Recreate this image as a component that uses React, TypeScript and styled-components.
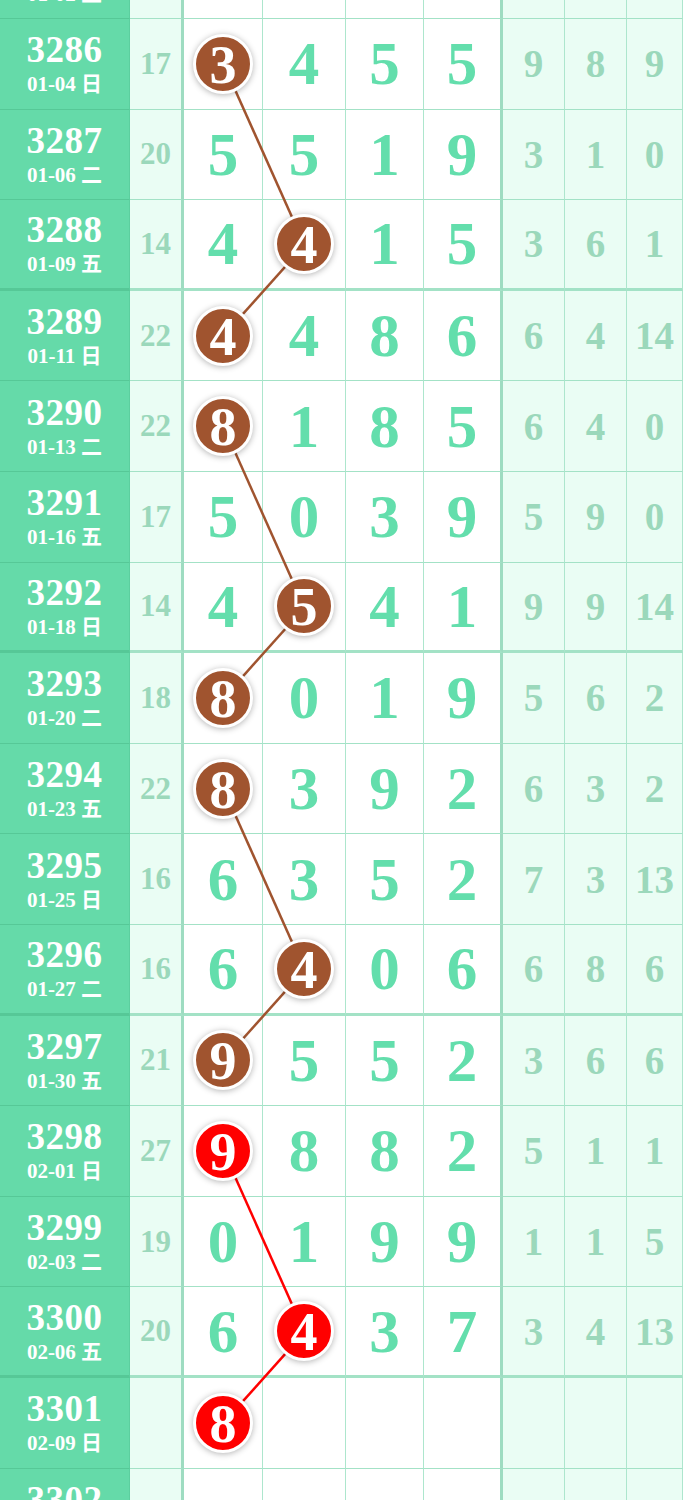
import React from 'react';
import styled, { createGlobalStyle } from 'styled-components';

const GlobalStyle = createGlobalStyle`
  html, body {
    margin: 0;
    padding: 0;
    background: #ffffff;
    overflow: hidden;
  }
`;

const ROW_H = 90.6;
const COLS = [130, 54, 79, 83, 78, 79, 62, 62, 56];
const SERIF = `'Liberation Serif', 'Noto Sans CJK SC', serif`;

type Ball = { col: number; color: 'brown' | 'red' };
type Draw = {
  no: number;
  date: string;
  sum?: number;
  digits: (number | null)[];
  rest: (number | null)[];
  ball?: Ball;
};

const draws: Draw[] = [
  { no: 3285, date: '01-02 五', sum: 19, digits: [7, 2, 6, 4], rest: [8, 7, 8] },
  { no: 3286, date: '01-04 日', sum: 17, digits: [3, 4, 5, 5], rest: [9, 8, 9], ball: { col: 0, color: 'brown' } },
  { no: 3287, date: '01-06 二', sum: 20, digits: [5, 5, 1, 9], rest: [3, 1, 0] },
  { no: 3288, date: '01-09 五', sum: 14, digits: [4, 4, 1, 5], rest: [3, 6, 1], ball: { col: 1, color: 'brown' } },
  { no: 3289, date: '01-11 日', sum: 22, digits: [4, 4, 8, 6], rest: [6, 4, 14], ball: { col: 0, color: 'brown' } },
  { no: 3290, date: '01-13 二', sum: 22, digits: [8, 1, 8, 5], rest: [6, 4, 0], ball: { col: 0, color: 'brown' } },
  { no: 3291, date: '01-16 五', sum: 17, digits: [5, 0, 3, 9], rest: [5, 9, 0] },
  { no: 3292, date: '01-18 日', sum: 14, digits: [4, 5, 4, 1], rest: [9, 9, 14], ball: { col: 1, color: 'brown' } },
  { no: 3293, date: '01-20 二', sum: 18, digits: [8, 0, 1, 9], rest: [5, 6, 2], ball: { col: 0, color: 'brown' } },
  { no: 3294, date: '01-23 五', sum: 22, digits: [8, 3, 9, 2], rest: [6, 3, 2], ball: { col: 0, color: 'brown' } },
  { no: 3295, date: '01-25 日', sum: 16, digits: [6, 3, 5, 2], rest: [7, 3, 13] },
  { no: 3296, date: '01-27 二', sum: 16, digits: [6, 4, 0, 6], rest: [6, 8, 6], ball: { col: 1, color: 'brown' } },
  { no: 3297, date: '01-30 五', sum: 21, digits: [9, 5, 5, 2], rest: [3, 6, 6], ball: { col: 0, color: 'brown' } },
  { no: 3298, date: '02-01 日', sum: 27, digits: [9, 8, 8, 2], rest: [5, 1, 1], ball: { col: 0, color: 'red' } },
  { no: 3299, date: '02-03 二', sum: 19, digits: [0, 1, 9, 9], rest: [1, 1, 5] },
  { no: 3300, date: '02-06 五', sum: 20, digits: [6, 4, 3, 7], rest: [3, 4, 13], ball: { col: 1, color: 'red' } },
  { no: 3301, date: '02-09 日', digits: [8, null, null, null], rest: [null, null, null], ball: { col: 0, color: 'red' } },
  { no: 3302, date: '02-11 二', digits: [null, null, null, null], rest: [null, null, null] },
];

// balls joined by a line, four rows to a group
const groups: number[][] = [
  [3286, 3288, 3289],
  [3290, 3292, 3293],
  [3294, 3296, 3297],
  [3298, 3300, 3301],
];

const BALL_COLORS = { brown: '#a0542f', red: '#ff0000' };

const Page = styled.div`
  width: 684px;
  height: 1500px;
  overflow: hidden;
`;

const Chart = styled.div`
  position: relative;
  margin-top: -71.6px;
  width: ${COLS.reduce((a, b) => a + b, 0)}px;
`;

const Row = styled.div<{ $thick: boolean }>`
  display: grid;
  grid-template-columns: ${COLS.map((c) => c + 'px').join(' ')};
  height: ${ROW_H}px;
  --line: ${(p) => (p.$thick ? '3px' : '1px')};
`;

const PeriodCell = styled.div`
  box-sizing: border-box;
  background: #65daa9;
  border-bottom: var(--line) solid #56c897;
  border-right: 1px solid #5ccf9f;
  display: flex;
  flex-direction: column;
  align-items: center;
  justify-content: center;
  color: #ffffff;
  font-family: ${SERIF};
  font-weight: 700;
`;

const PeriodNo = styled.div`
  font-size: 37px;
  line-height: 36px;
  letter-spacing: 0.5px;
`;

const PeriodDate = styled.div`
  font-size: 21px;
  line-height: 22px;
  margin-top: 5px;
`;

const Cell = styled.div<{ $mint?: boolean; $edge?: boolean }>`
  box-sizing: border-box;
  background: ${(p) => (p.$mint ? '#eafdf4' : '#ffffff')};
  border-bottom: var(--line) solid #a3e2c6;
  border-right: ${(p) => (p.$edge ? '3px solid #9edcc1' : '1px solid #ade6cd')};
  display: flex;
  align-items: center;
  justify-content: center;
  font-family: ${SERIF};
  font-weight: 700;
`;

const SumText = styled.span`
  font-size: 31px;
  color: #9bd8bb;
`;

const BigDigit = styled.span`
  font-size: 61px;
  line-height: 1;
  color: #63deac;
`;

const SmallDigit = styled.span`
  font-size: 39px;
  color: #9bd8bb;
`;

const BallMark = styled.span<{ $color: string }>`
  position: relative;
  z-index: 2;
  box-sizing: border-box;
  width: 60px;
  height: 60px;
  border-radius: 50%;
  border: 3px solid #ffffff;
  background: ${(p) => p.$color};
  box-shadow: 0 1px 6px rgba(0, 0, 0, 0.3);
  display: flex;
  align-items: center;
  justify-content: center;
  color: #ffffff;
  font-size: 54px;
  line-height: 1;
  padding-top: 2px;
`;

const Lines = styled.svg`
  position: absolute;
  top: 0;
  left: 0;
  z-index: 1;
  pointer-events: none;
`;

function colCenter(col: number) {
  let x = COLS[0] + COLS[1];
  for (let i = 0; i < col; i++) x += COLS[2 + i];
  return x + COLS[2 + col] / 2;
}

function App() {
  const width = COLS.reduce((a, b) => a + b, 0);
  const height = draws.length * ROW_H;
  const center = (no: number) => {
    const i = draws.findIndex((d) => d.no === no);
    const d = draws[i];
    return { x: colCenter(d.ball!.col), y: i * ROW_H + ROW_H / 2, color: d.ball!.color };
  };

  return (
    <Page>
      <GlobalStyle />
      <Chart>
        {draws.map((d) => (
          <Row key={d.no} $thick={(d.no - 3284) % 4 === 0}>
            <PeriodCell>
              <PeriodNo>{d.no}</PeriodNo>
              <PeriodDate>{d.date}</PeriodDate>
            </PeriodCell>
            <Cell $mint $edge>
              {d.sum !== undefined && <SumText>{d.sum}</SumText>}
            </Cell>
            {d.digits.map((n, i) => (
              <Cell key={'d' + i} $edge={i === 3}>
                {d.ball && d.ball.col === i ? (
                  <BallMark $color={BALL_COLORS[d.ball.color]}>{n}</BallMark>
                ) : (
                  n !== null && <BigDigit>{n}</BigDigit>
                )}
              </Cell>
            ))}
            {d.rest.map((n, i) => (
              <Cell key={'r' + i} $mint>
                {n !== null && <SmallDigit>{n}</SmallDigit>}
              </Cell>
            ))}
          </Row>
        ))}
        <Lines width={width} height={height}>
          {groups.map((g, gi) =>
            g.slice(1).map((no, k) => {
              const a = center(g[k]);
              const b = center(no);
              return (
                <line
                  key={gi + '-' + k}
                  x1={a.x}
                  y1={a.y}
                  x2={b.x}
                  y2={b.y}
                  stroke={BALL_COLORS[a.color]}
                  strokeWidth={2.5}
                />
              );
            })
          )}
        </Lines>
      </Chart>
    </Page>
  );
}

export default App;
